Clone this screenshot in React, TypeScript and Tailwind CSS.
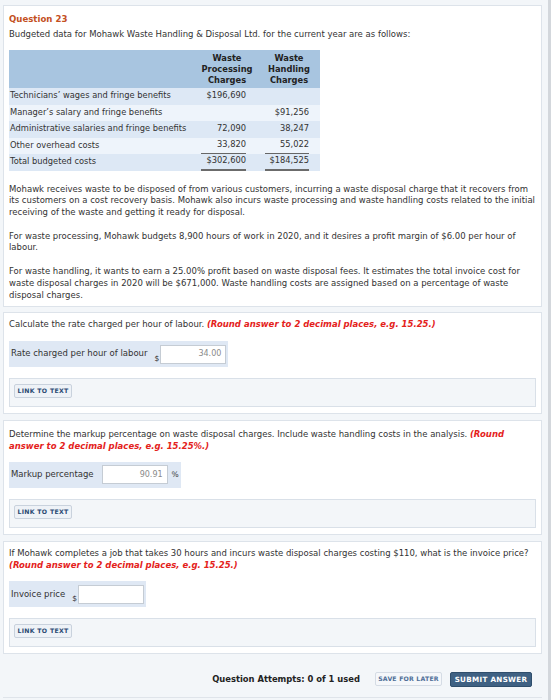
import React from "react";

function LinkBox() {
  return (
    <div className="mt-[11px] h-[29px] w-[527px] border border-[#d9e0e8] bg-[#f3f6f9] pl-[4px] pt-[5px]">
      <div className="flex h-[14px] w-[58px] items-center justify-center rounded-[2px] border border-[#c9d2dd] bg-[#eef2f7] text-[6.2px] font-bold leading-[8px] tracking-[0.3px] text-[#2c4a74]">
        LINK TO TEXT
      </div>
    </div>
  );
}

function Input({ value }: { value: string }) {
  return (
    <div className="flex h-[19px] w-[66px] items-center justify-end border border-[#c5ccd4] bg-white pr-[4px] text-[8px] text-[#8a8a8a]">
      {value}
    </div>
  );
}

type Row = { label: string; a: string; b: string; under?: boolean; total?: boolean };

const rows: Row[] = [
  { label: "Technicians\u2019 wages and fringe benefits", a: "$196,690", b: "" },
  { label: "Manager\u2019s salary and fringe benefits", a: "", b: "$91,256" },
  { label: "Administrative salaries and fringe benefits", a: "72,090", b: "38,247" },
  { label: "Other overhead costs", a: "33,820", b: "55,022", under: true },
  { label: "Total budgeted costs", a: "$302,600", b: "$184,525", total: true },
];

function NumCell({ v, under, total, side }: { v: string; under?: boolean; total?: boolean; side: string }) {
  return (
    <td className="p-0">
      <div className={`flex h-[16.5px] items-center justify-end ${side}`}>
        <div
          className={`flex h-full w-full items-center justify-end ${under ? "border-b border-[#666]" : ""} ${
            total ? "border-b-2 border-[#6b6b6b]" : ""
          }`}
        >
          {v}
        </div>
      </div>
    </td>
  );
}

export default function App() {
  return (
    <div className="flex min-h-[700px] w-[554px] bg-[#f3f6f9] font-['DejaVu_Sans',Verdana,sans-serif] text-[8.5px] leading-[11.8px] text-[#333]">
      <div className="flex w-[548px] flex-col pl-[3px] pt-[5px]">
        {/* Card 1 */}
        <div className="w-[539px] border border-[#dde3ea] bg-white pb-[5px] pl-[5px] pr-[2px] pt-[7px]">
          <div className="w-[528px]">
            <div className="text-[8.6px] font-bold leading-[12px] text-[#c4501e]">Question 23</div>
            <p className="mt-[3px] leading-[12px]">
              Budgeted data for Mohawk Waste Handling &amp; Disposal Ltd. for the current year are as follows:
            </p>
            <table className="mt-[10px] w-[311px] border-collapse text-[8.3px]">
              <thead>
                <tr className="bg-[#a8c5e0]">
                  <th className="w-[187px] p-0"></th>
                  <th className="w-[62px] px-0 py-[2.5px] text-center font-bold leading-[11px] text-[#222]">
                    Waste
                    <br />
                    Processing
                    <br />
                    Charges
                  </th>
                  <th className="w-[62px] px-0 py-[2.5px] text-center font-bold leading-[11px] text-[#222]">
                    Waste
                    <br />
                    Handling
                    <br />
                    Charges
                  </th>
                </tr>
              </thead>
              <tbody>
                {rows.map((r, i) => (
                  <tr key={i} className={i % 2 === 0 ? "bg-[#dde8f5]" : "bg-[#eef4fb]"}>
                    <td className="h-[16.5px] p-0 pl-[1px] text-left">{r.label}</td>
                    <NumCell v={r.a} under={r.under} total={r.total} side="ml-[5px] mr-[12px]" />
                    <NumCell v={r.b} under={r.under} total={r.total} side="ml-[7px] mr-[11px]" />
                  </tr>
                ))}
              </tbody>
            </table>
            <p className="mt-[13px]">
              Mohawk receives waste to be disposed of from various customers, incurring a waste disposal charge that it recovers from
              its customers on a cost recovery basis. Mohawk also incurs waste processing and waste handling costs related to the initial
              receiving of the waste and getting it ready for disposal.
            </p>
            <p className="mt-[11.8px]">
              For waste processing, Mohawk budgets 8,900 hours of work in 2020, and it desires a profit margin of $6.00 per hour of
              labour.
            </p>
            <p className="mt-[11.8px]">
              For waste handling, it wants to earn a 25.00% profit based on waste disposal fees. It estimates the total invoice cost for
              waste disposal charges in 2020 will be $671,000. Waste handling costs are assigned based on a percentage of waste
              disposal charges.
            </p>
          </div>
        </div>

        {/* Card 2 */}
        <div className="mt-[5px] w-[539px] border border-[#dde3ea] bg-white pb-[6px] pl-[5px] pr-[2px] pt-[6px]">
          <p className="w-[528px]">
            Calculate the rate charged per hour of labour.{" "}
            <span className="font-bold italic text-[#e4221b]">(Round answer to 2 decimal places, e.g. 15.25.)</span>
          </p>
          <div className="mt-[10px] flex h-[26px] w-fit items-center bg-[#dfe8f4] pl-[2px] pr-[2px]">
            <span>Rate charged per hour of labour</span>
            <span className="ml-[7px] mr-[1px] mt-[9px] text-[7.6px] leading-[9px]">$</span>
            <Input value="34.00" />
          </div>
          <LinkBox />
        </div>

        {/* Card 3 */}
        <div className="mt-[6px] w-[539px] border border-[#dde3ea] bg-white pb-[6px] pl-[5px] pr-[2px] pt-[8px]">
          <p className="w-[528px]">
            Determine the markup percentage on waste disposal charges. Include waste handling costs in the analysis.{" "}
            <span className="font-bold italic text-[#e4221b]">(Round answer to 2 decimal places, e.g. 15.25%.)</span>
          </p>
          <div className="mt-[9px] flex h-[26px] w-fit items-center bg-[#dfe8f4] pl-[2px] pr-[2px]">
            <span>Markup percentage</span>
            <span className="ml-[8px]">
              <Input value="90.91" />
            </span>
            <span className="ml-[4px] text-[7.6px]">%</span>
          </div>
          <LinkBox />
        </div>

        {/* Card 4 */}
        <div className="mt-[6px] w-[539px] border border-[#dde3ea] bg-white pb-[6px] pl-[5px] pr-[2px] pt-[6px]">
          <p className="w-[528px]">
            If Mohawk completes a job that takes 30 hours and incurs waste disposal charges costing $110, what is the invoice price?{" "}
            <span className="font-bold italic text-[#e4221b]">(Round answer to 2 decimal places, e.g. 15.25.)</span>
          </p>
          <div className="mt-[10px] flex h-[26px] w-fit items-center bg-[#dfe8f4] pl-[2px] pr-[2px]">
            <span>Invoice price</span>
            <span className="ml-[7px] mr-[1px] mt-[9px] text-[7.6px] leading-[9px]">$</span>
            <Input value="" />
          </div>
          <LinkBox />
        </div>

        {/* Footer */}
        <div className="flex h-[44px] w-[539px] items-start justify-end border-b border-[#dfe4ea] pr-[10px] pt-[18px]">
          <span className="mt-[1px] text-[8.4px] font-bold leading-[12px] text-[#222]">Question Attempts: 0 of 1 used</span>
          <div className="ml-[15px] flex h-[14px] w-[67px] items-center justify-center rounded-[2px] border border-[#d5dce5] bg-[#f5f7fa] text-[6.2px] font-bold leading-[8px] tracking-[0.2px] text-[#4f6f98]">
            SAVE FOR LATER
          </div>
          <div className="ml-[8px] flex h-[15px] w-[82px] items-center justify-center rounded-[2px] border border-[#2f4e6c] bg-[#3f6183] text-[7.2px] font-bold leading-[9px] tracking-[0.3px] text-white">
            SUBMIT ANSWER
          </div>
        </div>
      </div>
      <div className="w-[3px] bg-[#d3d7dc]" />
      <div className="flex-1 bg-white" />
    </div>
  );
}
